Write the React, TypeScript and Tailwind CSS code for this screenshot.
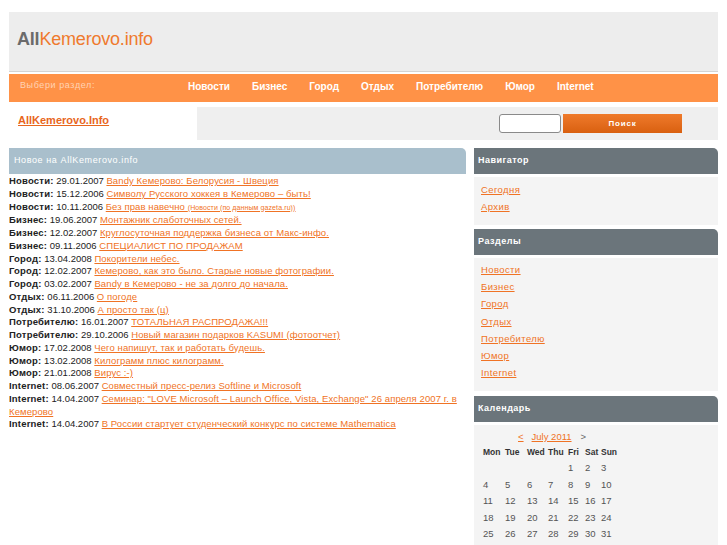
const news: [string, string, React.ReactNode][] = [
  ["Новости:", "29.01.2007", "Bandy Кемерово: Белорусия - Швеция"],
  ["Новости:", "15.12.2006", "Символу Русского хоккея в Кемерово – быть!"],
  [
    "Новости:",
    "10.11.2006",
    <>
      Без прав навечно <span className="text-[7px]">(Новости (по данным gazeta.ru))</span>
    </>,
  ],
  ["Бизнес:", "19.06.2007", "Монтажник слаботочных сетей."],
  ["Бизнес:", "12.02.2007", "Круглосуточная поддержка бизнеса от Макс-инфо."],
  ["Бизнес:", "09.11.2006", "СПЕЦИАЛИСТ ПО ПРОДАЖАМ"],
  ["Город:", "13.04.2008", "Покорители небес."],
  ["Город:", "12.02.2007", "Кемерово, как это было. Старые новые фотографии."],
  ["Город:", "03.02.2007", "Bandy в Кемерово - не за долго до начала."],
  ["Отдых:", "06.11.2006", "О погоде"],
  ["Отдых:", "31.10.2006", "А просто так (ц)"],
  ["Потребителю:", "16.01.2007", "ТОТАЛЬНАЯ РАСПРОДАЖА!!!"],
  ["Потребителю:", "29.10.2006", "Новый магазин подарков KASUMI (фотоотчет)"],
  ["Юмор:", "17.02.2008", "Чего напишут, так и работать будешь."],
  ["Юмор:", "13.02.2008", "Килограмм плюс килограмм."],
  ["Юмор:", "21.01.2008", "Вирус :-)"],
  ["Internet:", "08.06.2007", "Совместный пресс-релиз Softline и Microsoft"],
  [
    "Internet:",
    "14.04.2007",
    'Семинар: "LOVE Microsoft – Launch Office, Vista, Exchange" 26 апреля 2007 г. в Кемерово',
  ],
  ["Internet:", "14.04.2007", "В России стартует студенческий конкурс по системе Mathematica"],
];

const menu = ["Новости", "Бизнес", "Город", "Отдых", "Потребителю", "Юмор", "Internet"];

const weeks = [
  ["", "", "", "", "1", "2", "3"],
  ["4", "5", "6", "7", "8", "9", "10"],
  ["11", "12", "13", "14", "15", "16", "17"],
  ["18", "19", "20", "21", "22", "23", "24"],
  ["25", "26", "27", "28", "29", "30", "31"],
];

function SideHead({ title }: { title: string }) {
  return (
    <div className="h-[26px] bg-[#6b757b] rounded-tr-[5px] flex items-center pl-[4px] text-[9px] font-bold text-white tracking-[0.5px]">
      {title}
    </div>
  );
}

export default function App() {
  return (
    <div className="bg-white min-h-[545px] pt-[12px] font-['Liberation_Sans',Arial,sans-serif]">
      <div className="ml-[9px] w-[709px]">
        {/* Header */}
        <div className="h-[60px] bg-[#ededed] border-b border-[#d4d4d4] flex items-center pl-[8px] pb-[4px]">
          <span className="text-[18px] tracking-[-0.2px]">
            <span className="font-bold text-[#6b6b6b]">All</span>
            <span className="text-[#ef7a2e]">Kemerovo.info</span>
          </span>
        </div>

        {/* Menu */}
        <div className="mt-[2px] h-[28px] bg-[#ff9247] flex items-center pb-[4px]">
          <span className="w-[179px] pl-[11px] text-[9px] text-[#ffd3b4] tracking-[0.6px]">Выбери раздел:</span>
          <div className="flex gap-[22px] text-[10px] font-bold text-white">
            {menu.map((m) => (
              <span key={m}>{m}</span>
            ))}
          </div>
        </div>

        {/* Sub header / search */}
        <div className="mt-[5px] h-[33px] flex">
          <div className="w-[188px] pl-[9px] pt-[6px] text-[11px] leading-[14px]">
            <span className="font-bold text-[#e8661c] underline">AllKemerovo.Info</span>
          </div>
          <div className="flex-1 bg-[#efefef] flex items-center justify-end pr-[36px] gap-[2px]">
            <div className="w-[62px] h-[19px] bg-white border border-[#8a8a8a] rounded-[3px]" />
            <div className="w-[119px] h-[19px] bg-gradient-to-b from-[#ef7a2a] to-[#d9600f] flex items-center justify-center text-[8px] font-bold text-white tracking-[0.8px]">
              Поиск
            </div>
          </div>
        </div>

        {/* Main */}
        <div className="mt-[8px] flex gap-[8px]">
          <div className="w-[457px]">
            <div className="h-[26px] bg-[#a9bfcc] rounded-tr-[5px] flex items-center pl-[5px] text-[9px] text-white tracking-[0.6px]">
              Новое на AllKemerovo.info
            </div>
            <div className="pt-[1px] text-[9.5px] leading-[12.75px] text-[#222]">
              {news.map(([cat, date, title], i) => (
                <div key={i}>
                  <span className="font-bold tracking-[0.2px]">{cat}</span> {date}{" "}
                  <span className="text-[#f07325] underline tracking-[0.1px]">{title}</span>
                </div>
              ))}
            </div>
          </div>

          <div className="w-[244px]">
            <SideHead title="Навигатор" />
            <div className="mt-[3px] h-[48px] bg-[#f4f4f4] pl-[7px] pt-[6px] flex flex-col gap-[4px] text-[9.5px] leading-[13px]">
              <span className="text-[#f07325] underline tracking-[0.4px]">Сегодня</span>
              <span className="text-[#f07325] underline tracking-[0.4px]">Архив</span>
            </div>

            <div className="mt-[4px]">
              <SideHead title="Разделы" />
            </div>
            <div className="mt-[3px] h-[133px] bg-[#f4f4f4] pl-[7px] pt-[5px] flex flex-col gap-[4.2px] text-[9.5px] leading-[13px]">
              {menu.map((m) => (
                <span key={m} className="text-[#f07325] underline tracking-[0.4px]">
                  {m}
                </span>
              ))}
            </div>

            <div className="mt-[5px]">
              <SideHead title="Календарь" />
            </div>
            <div className="mt-[3px] h-[130px] bg-[#f4f4f4] pl-[9px] pt-[5px] text-[9.5px] text-[#444]">
              <div className="flex gap-[4px] pl-[35px] leading-[13px]">
                <span className="text-[#f07325] underline">&lt;</span>
                <span className="text-[#f07325] underline ml-[4px]">July 2011</span>
                <span className="ml-[5px] text-[#666]">&gt;</span>
              </div>
              <div className="grid grid-cols-[22px_22px_21px_20px_17px_16px_20px] mt-[2px] leading-[16.5px]">
                {["Mon", "Tue", "Wed", "Thu", "Fri", "Sat", "Sun"].map((d) => (
                  <span key={d} className="font-bold text-[#333] text-[8.5px] leading-[15px]">
                    {d}
                  </span>
                ))}
                {weeks.flat().map((d, i) => (
                  <span key={i} className="text-[#555]">
                    {d}
                  </span>
                ))}
              </div>
            </div>
          </div>
        </div>
      </div>
    </div>
  );
}
